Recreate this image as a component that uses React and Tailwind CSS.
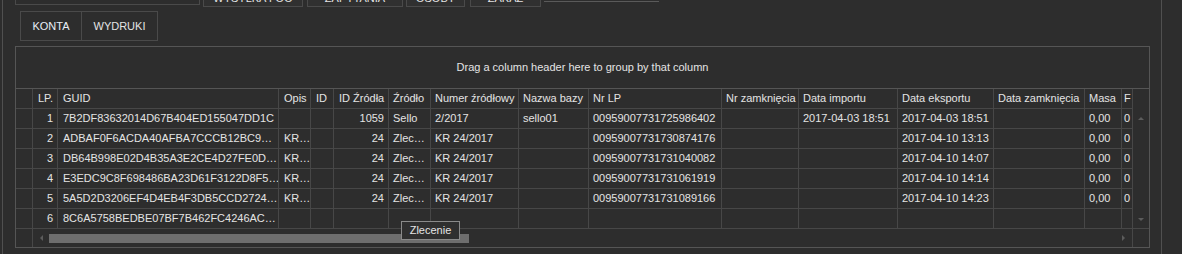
import React from 'react';

const columns = [
  { key: 'ind', title: '', w: 'w-[17px]', pad: 'pl-[5px]' },
  { key: 'lp', title: 'LP.', w: 'w-[25px]', right: true, pad: 'pl-[5px]' },
  { key: 'guid', title: 'GUID', w: 'w-[221px]', pad: 'pl-[5px]' },
  { key: 'opis', title: 'Opis', w: 'w-[32px]', pad: 'pl-[5px]' },
  { key: 'id', title: 'ID', w: 'w-[23px]', pad: 'pl-[5px]' },
  { key: 'idz', title: 'ID Źródła', w: 'w-[55px]', right: true, pad: 'pl-[5px]' },
  { key: 'zr', title: 'Źródło', w: 'w-[42px]', pad: 'pl-[4px]' },
  { key: 'num', title: 'Numer źródłowy', w: 'w-[88px]', pad: 'pl-[4px]' },
  { key: 'baza', title: 'Nazwa bazy', w: 'w-[70px]', pad: 'pl-[4px]' },
  { key: 'nrlp', title: 'Nr LP', w: 'w-[133px]', pad: 'pl-[4px]' },
  { key: 'nrzam', title: 'Nr zamknięcia', w: 'w-[77px]', pad: 'pl-[4px]' },
  { key: 'dimp', title: 'Data importu', w: 'w-[99px]', pad: 'pl-[4px]' },
  { key: 'deks', title: 'Data eksportu', w: 'w-[96px]', pad: 'pl-[4px]' },
  { key: 'dzam', title: 'Data zamknięcia', w: 'w-[91px]', pad: 'pl-[4px]' },
  { key: 'masa', title: 'Masa', w: 'w-[37px]', pad: 'pl-[4px]' },
  { key: 'f', title: 'F', w: 'w-[11px]', pad: 'pl-[2px]' },
];

const rows = [
  { lp: '1', guid: '7B2DF83632014D67B404ED155047DD1C', idz: '1059', zr: 'Sello', num: '2/2017', baza: 'sello01', nrlp: '00959007731725986402', dimp: '2017-04-03 18:51', deks: '2017-04-03 18:51', masa: '0,00', f: '0' },
  { lp: '2', guid: 'ADBAF0F6ACDA40AFBA7CCCB12BC9…', opis: 'KR…', idz: '24', zr: 'Zlec…', num: 'KR 24/2017', nrlp: '00959007731730874176', deks: '2017-04-10 13:13', masa: '0,00', f: '0' },
  { lp: '3', guid: 'DB64B998E02D4B35A3E2CE4D27FE0D…', opis: 'KR…', idz: '24', zr: 'Zlec…', num: 'KR 24/2017', nrlp: '00959007731731040082', deks: '2017-04-10 14:07', masa: '0,00', f: '0' },
  { lp: '4', guid: 'E3EDC9C8F698486BA23D61F3122D8F5…', opis: 'KR…', idz: '24', zr: 'Zlec…', num: 'KR 24/2017', nrlp: '00959007731731061919', deks: '2017-04-10 14:14', masa: '0,00', f: '0' },
  { lp: '5', guid: '5A5D2D3206EF4D4EB4F3DB5CCD2724…', opis: 'KR…', idz: '24', zr: 'Zlec…', num: 'KR 24/2017', nrlp: '00959007731731089166', deks: '2017-04-10 14:23', masa: '0,00', f: '0' },
  { lp: '6', guid: '8C6A5758BEDBE07BF7B462FC4246AC…' },
];

const Arrow = ({ dir }) => {
  const pts = {
    up: '0,4 3,1 6,4',
    down: '0,1 3,4 6,1',
    left: '4,0 1,3 4,6',
    right: '1,0 4,3 1,6',
  }[dir];
  return (
    <svg width="6" height="6" viewBox="0 0 6 6" className="block">
      <polygon points={pts} fill="#5c5c5c" />
    </svg>
  );
};

const Row = ({ row, header }) => (
  <div className="flex h-[20px] border-b border-[#474747]">
    {columns.map((c) => (
      <div
        key={c.key}
        className={`${c.w} shrink-0 h-full border-r border-[#474747] flex items-center overflow-hidden whitespace-nowrap ${
          c.right && !header ? 'justify-end pr-[4px]' : c.pad
        }`}
      >
        {header ? c.title : row[c.key] || ''}
      </div>
    ))}
  </div>
);

const TopButton = ({ label, w, ml }) => (
  <div className={`${ml} ${w} h-[7px] border-l border-r border-b border-[#4a4a4a] bg-[#303030] overflow-hidden flex justify-center`}>
    <span className="-mt-[7px] leading-[11px]">{label}</span>
  </div>
);

export default function App() {
  return (
    <div
      className="relative w-[1182px] h-[254px] bg-[#2d2d2d] overflow-hidden text-[11px] text-[#e4e4e4] pl-[2px]"
      style={{ fontFamily: '"Liberation Sans", Arial, sans-serif' }}
    >
      <div className="w-[1160px] h-full border-l border-r border-[#505050] flex flex-col">
        {/* top strip, cut off by the window edge */}
        <div className="flex h-[7px] items-start">
          <div className="ml-[12px] w-[185px] h-[5px] border-l border-r border-b border-[#4a4a4a]" />
          <TopButton label="WYSYŁKA FOO" w="w-[100px]" ml="ml-[3px]" />
          <TopButton label="ZAPYTANIA" w="w-[96px]" ml="ml-[4px]" />
          <TopButton label="OSOBY" w="w-[59px]" ml="ml-[3px]" />
          <TopButton label="ZAKAZ" w="w-[71px]" ml="ml-[5px]" />
          <div className="ml-[3px] w-[115px] h-[2px] border-b border-[#5a5a5a]" />
        </div>

        {/* tabs */}
        <div className="flex mt-[4px] ml-[17px] h-[30px]">
          <div className="w-[62px] h-full border border-[#4a4a4a] flex items-center justify-center text-[#e8eef6]">
            KONTA
          </div>
          <div className="w-[76px] h-full border border-l-0 border-[#4a4a4a] flex items-center justify-center">
            WYDRUKI
          </div>
        </div>

        {/* grid */}
        <div className="mt-[5px] ml-[12px] w-[1135px] h-[202px] border border-[#555555] flex flex-col">
          <div className="h-[42px] border-b border-[#555555] flex items-center justify-center">
            Drag a column header here to group by that column
          </div>
          <div className="flex">
            <div className="w-[1117px] flex flex-col">
              <Row header />
              {rows.map((r) => (
                <Row key={r.lp} row={r} />
              ))}
              <div className="flex h-[18px]">
                <div className="w-[17px] h-full border-r border-[#474747]" />
                <div className="w-[1100px] h-full border-r border-[#474747] flex items-center">
                  <div className="w-[16px] flex justify-center pl-[2px]">
                    <Arrow dir="left" />
                  </div>
                  <div className="w-[420px] h-[9px] bg-[#6e6e6e] mt-[1px]" />
                  <div className="flex-1" />
                  <div className="w-[16px] flex justify-center">
                    <Arrow dir="right" />
                  </div>
                </div>
              </div>
            </div>
            <div className="w-[16px] flex flex-col">
              <div className="h-[20px]" />
              <div className="h-[120px] border-b border-[#474747] flex flex-col items-center justify-between pt-[7px] pb-[5px]">
                <Arrow dir="up" />
                <Arrow dir="down" />
              </div>
            </div>
          </div>
        </div>
      </div>

      {/* tooltip */}
      <div className="absolute left-[401px] top-[221px] w-[59px] h-[19px] border border-[#8a8a8a] bg-[#2f2f2f] flex items-center justify-center">
        Zlecenie
      </div>
    </div>
  );
}
